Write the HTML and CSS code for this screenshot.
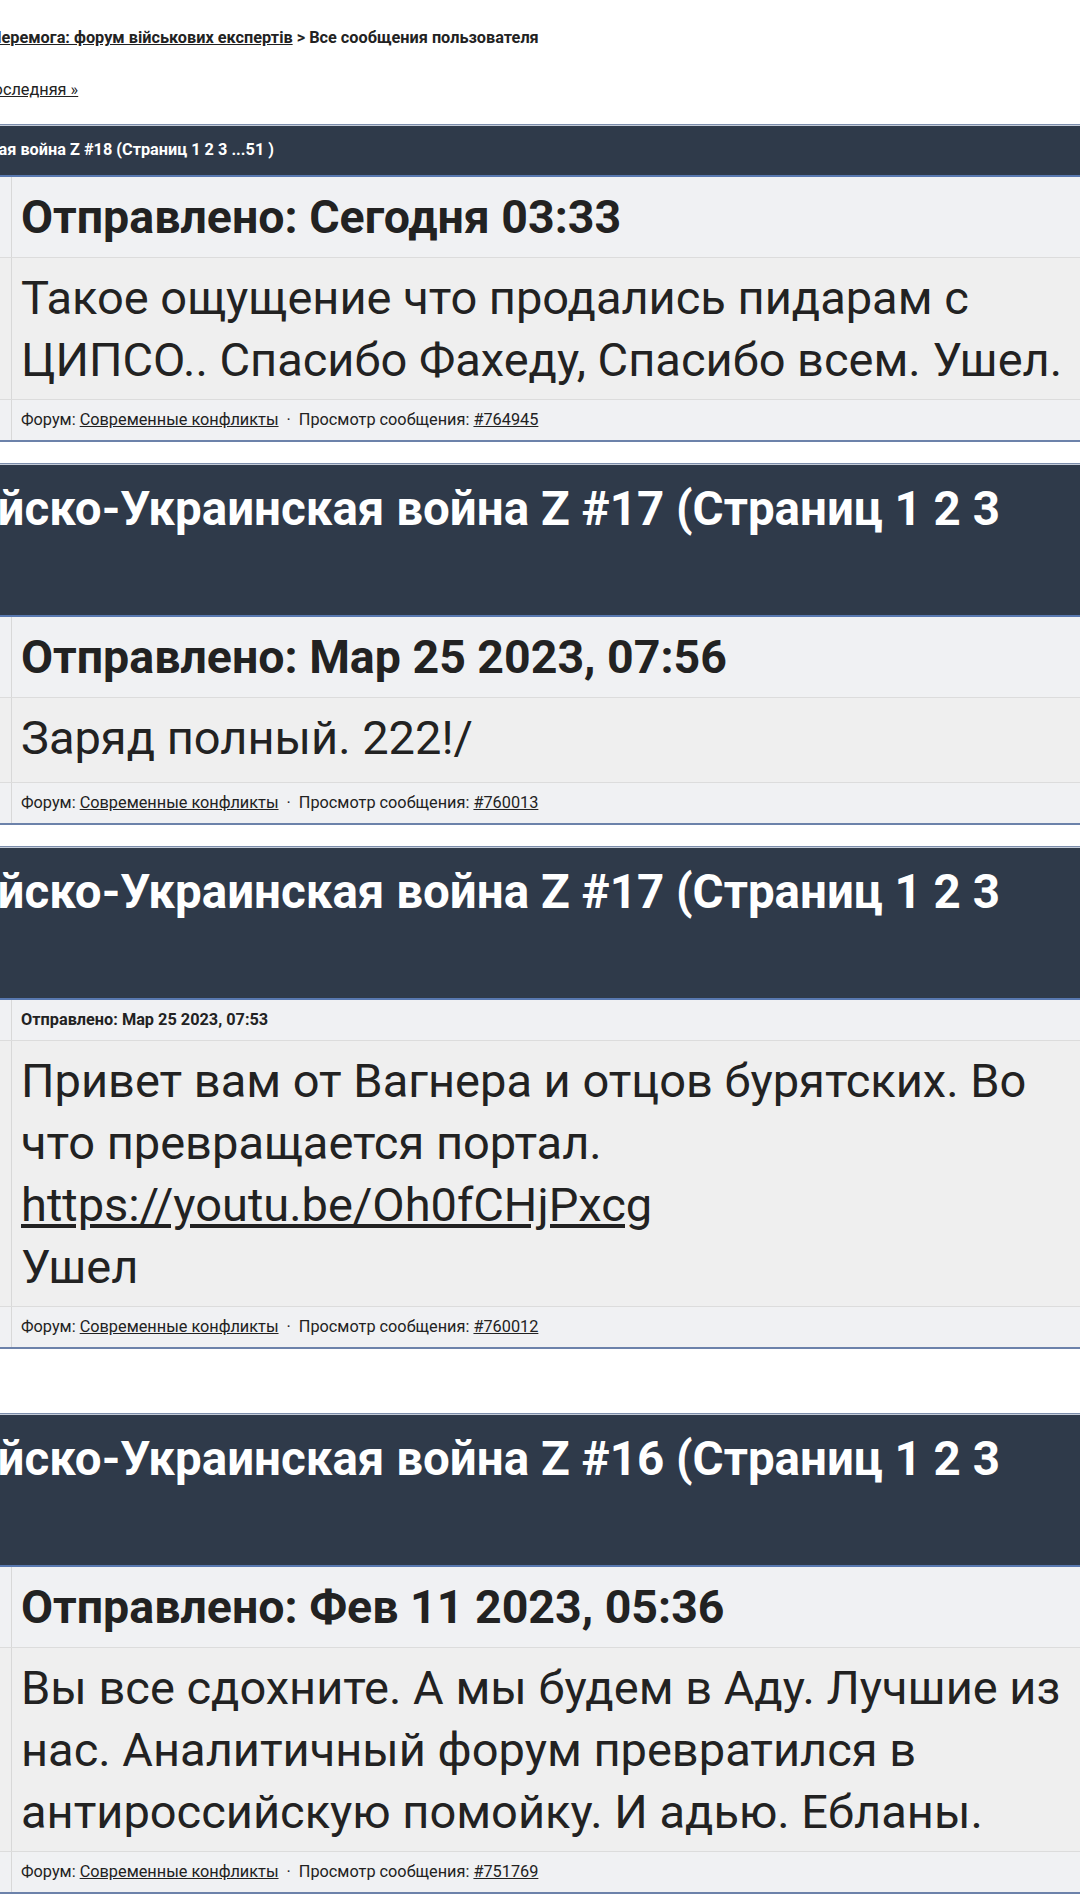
FILE: index.html
```html
<!DOCTYPE html>
<html lang="ru">
<head>
  <meta charset="UTF-8">
  <title>Все сообщения пользователя</title>
  <link rel="stylesheet" href="styles.css">
</head>
<body>

<div class="nav">
  <p class="crumbs"><a href="#">Перемога: форум військових експертів</a> &gt; Все сообщения пользователя</p>
  <p class="pages"><a href="#">Последняя »</a></p>
</div>

<!-- сообщение 764945 -->
<div class="post">
  <div class="topic small"><a href="#">Российско-Украинская война Z #18</a> (Страниц 1 2 3 ...51 )</div>
  <div class="row date big">
    <div class="side"></div>
    <div class="cell">Отправлено: Сегодня 03:33</div>
  </div>
  <div class="row text">
    <div class="side"></div>
    <div class="cell">Такое ощущение что продались пидарам с ЦИПСО.. Спасибо Фахеду, Спасибо всем. Ушел.</div>
  </div>
  <div class="row foot">
    <div class="side"></div>
    <div class="cell">Форум: <a href="#">Современные конфликты</a><span class="sep">·</span>Просмотр сообщения: <a href="#">#764945</a></div>
  </div>
</div>

<!-- сообщение 760013 -->
<div class="post">
  <div class="topic big"><a href="#">Российско-Украинская война Z #17</a> (Страниц 1 2 3</div>
  <div class="row date big">
    <div class="side"></div>
    <div class="cell">Отправлено: Мар 25 2023, 07:56</div>
  </div>
  <div class="row text short">
    <div class="side"></div>
    <div class="cell">Заряд полный. 222!/</div>
  </div>
  <div class="row foot">
    <div class="side"></div>
    <div class="cell">Форум: <a href="#">Современные конфликты</a><span class="sep">·</span>Просмотр сообщения: <a href="#">#760013</a></div>
  </div>
</div>

<!-- сообщение 760012 -->
<div class="post">
  <div class="topic big"><a href="#">Российско-Украинская война Z #17</a> (Страниц 1 2 3</div>
  <div class="row date small">
    <div class="side"></div>
    <div class="cell">Отправлено: Мар 25 2023, 07:53</div>
  </div>
  <div class="row text">
    <div class="side"></div>
    <div class="cell">Привет вам от Вагнера и отцов бурятских. Во что превращается портал.<br><a href="#">https://youtu.be/Oh0fCHjPxcg</a><br>Ушел</div>
  </div>
  <div class="row foot">
    <div class="side"></div>
    <div class="cell">Форум: <a href="#">Современные конфликты</a><span class="sep">·</span>Просмотр сообщения: <a href="#">#760012</a></div>
  </div>
</div>

<!-- сообщение 751769 -->
<div class="post spaced">
  <div class="topic big"><a href="#">Российско-Украинская война Z #16</a> (Страниц 1 2 3</div>
  <div class="row date big">
    <div class="side"></div>
    <div class="cell">Отправлено: Фев 11 2023, 05:36</div>
  </div>
  <div class="row text">
    <div class="side"></div>
    <div class="cell">Вы все сдохните. А мы будем в Аду. Лучшие из нас. Аналитичный форум превратился в антироссийскую помойку. И адью. Ебланы.</div>
  </div>
  <div class="row foot">
    <div class="side"></div>
    <div class="cell">Форум: <a href="#">Современные конфликты</a><span class="sep">·</span>Просмотр сообщения: <a href="#">#751769</a></div>
  </div>
</div>

</body>
</html>
```

FILE: styles.css
```css
html {
  scrollbar-width: none;
}

body {
  margin: 0;
  font-family: Roboto, "Liberation Sans", sans-serif;
  color: #222;
  background: #fff;
  overflow-x: hidden;
}

a {
  color: inherit;
}

/* навигация сверху */
.nav {
  margin-left: -10px;
  font-size: 16.3px;
  line-height: 18px;
}

.crumbs {
  margin: 0;
  padding-top: 29px;
  font-weight: bold;
}

.pages {
  margin: 34px 0 0 -8px;
}

/* блок сообщения */
.post {
  margin: 25px -30px 0 -170px;
  border-top: 1px solid #7c8dab;
  border-bottom: 2px solid #6c82aa;
}

.post + .post {
  margin-top: 21px;
}

.post.spaced {
  margin-top: 64px;
}

.topic {
  background: #2f3a4a;
  color: #fff;
  font-weight: bold;
  border-top: 1px solid #c3cbd8;
  border-bottom: 2px solid #5878b0;
}

.topic a {
  text-decoration: none;
}

.topic.small {
  font-size: 16.3px;
  line-height: 18px;
  padding: 15px 0 16px 8px;
}

.topic.big {
  font-size: 47.5px;
  line-height: 62px;
  padding: 13px 0 75px 34px;
}

.row {
  display: flex;
  background: #efefef;
  border-top: 1px solid #dcdcdc;
}

.topic + .row {
  border-top: 0;
}

.side {
  width: 181px;
  flex: none;
  border-right: 1px solid #d8d8d8;
}

.cell {
  flex: 1;
  padding: 0 20px 0 9px;
}

.date,
.foot {
  background: #f0f1f3;
}

.date.big .cell {
  font-size: 46.5px;
  font-weight: bold;
  line-height: 56px;
  padding-top: 12px;
  padding-bottom: 12px;
}

.date.small .cell {
  font-size: 16.3px;
  font-weight: bold;
  line-height: 18px;
  padding-top: 11px;
  padding-bottom: 11px;
}

.text .cell {
  font-size: 47px;
  line-height: 62px;
  padding-top: 9px;
  padding-bottom: 8px;
}

.text.short .cell {
  padding-bottom: 13px;
}

.foot .cell {
  font-size: 16.3px;
  line-height: 18px;
  padding-top: 11px;
  padding-bottom: 11px;
}

.sep {
  margin: 0 8px;
}
```
